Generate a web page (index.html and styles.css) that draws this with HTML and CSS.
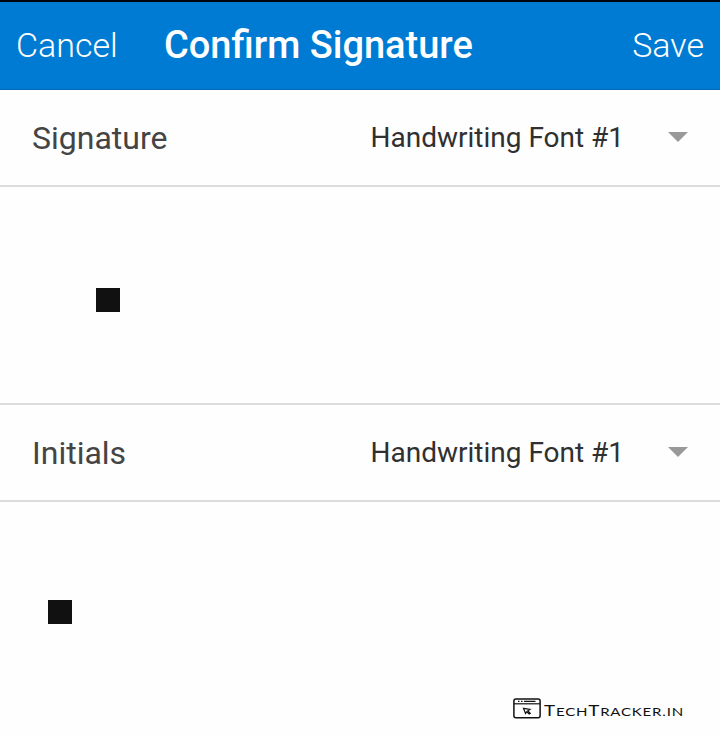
FILE: index.html
```html
<!DOCTYPE html>
<html lang="en">
<head>
<meta charset="utf-8">
<title>Confirm Signature</title>
<link rel="stylesheet" href="styles.css">
</head>
<body>
<main class="screen">
  <header class="bar">
    <span class="action">Cancel</span>
    <h1 class="title">Confirm Signature</h1>
    <span class="action save">Save</span>
  </header>
  <section class="row">
    <span class="label">Signature</span>
    <span class="font-name">Handwriting Font #1</span>
    <svg class="caret" viewBox="0 0 20 10"><path d="M0 0H20L10 10Z"/></svg>
  </section>
  <section class="preview signature"><div class="mark"></div></section>
  <section class="row">
    <span class="label">Initials</span>
    <span class="font-name">Handwriting Font #1</span>
    <svg class="caret" viewBox="0 0 20 10"><path d="M0 0H20L10 10Z"/></svg>
  </section>
  <section class="preview initials"><div class="mark"></div></section>
  <footer class="brand">
    <svg class="logo" viewBox="0 0 28 21" fill="none" stroke="#111">
      <rect x="0.9" y="0.9" width="26.2" height="18.8" rx="2" stroke-width="1.5"/>
      <path d="M1 5.8H27" stroke-width="1.2"/>
      <path d="M5 3.400H6.500M8 3.400H9.500M11 3.400H22.500" stroke-width="1.200"/>
      <path d="M10.500 10.300L17 11.300L14.900 12.800L17.300 15.300L16.200 16L13.800 13.700L12.500 15.500Z" stroke-width="1.200"/>
    </svg>
    <span class="brand-name">T<small>ECH</small>T<small>RACKER.IN</small></span>
  </footer>
</main>
</body>
</html>
```
FILE: styles.css
```css
* { box-sizing: border-box; }
body { margin: 0; background: #fefefe; font-family: Roboto, sans-serif; }
.screen { width: 720px; height: 735px; overflow: hidden; display: flex; flex-direction: column; }
.bar {
  height: 90px; flex: none; display: flex; align-items: center;
  padding: 0 16px 2px; background: #007bd3; color: #fff;
  border-top: 2px solid #000510; border-bottom: 1px solid #0868b0;
  white-space: nowrap;
}
.action { font-size: 34px; font-weight: 300; line-height: 40px; width: 148px; }
.title { margin: 0; font-size: 38px; font-weight: 500; line-height: 44px; }
.save { width: auto; margin-left: auto; }
.row {
  height: 97px; flex: none; display: flex; align-items: center;
  padding: 0 32px; border-bottom: 2px solid #dcdcdc;
}
.label { width: 338.5px; font-size: 32px; line-height: 38px; color: #444; }
.font-name { font-size: 28px; line-height: 34px; color: #303030; white-space: nowrap; }
.caret { width: 20px; height: 10px; margin: 0 0 2px auto; fill: #999; }
.preview { flex: none; }
.signature { height: 218px; padding: 101px 96px; border-bottom: 2px solid #dcdcdc; }
.initials { height: 196px; padding: 98px 48px; }
.mark { width: 24px; height: 24px; background: #111; }
.brand { display: flex; align-items: flex-start; padding-left: 513px; }
.logo { width: 28px; height: 21px; flex: none; }
.brand-name {
  margin: 3px 0 0 3px; font-family: Lato, sans-serif; font-size: 15px; line-height: 18px;
  color: #111; white-space: nowrap; transform: scaleX(1.25); transform-origin: left;
  letter-spacing: 0.65px;
}
.brand-name small { font-size: 12px; }
```
